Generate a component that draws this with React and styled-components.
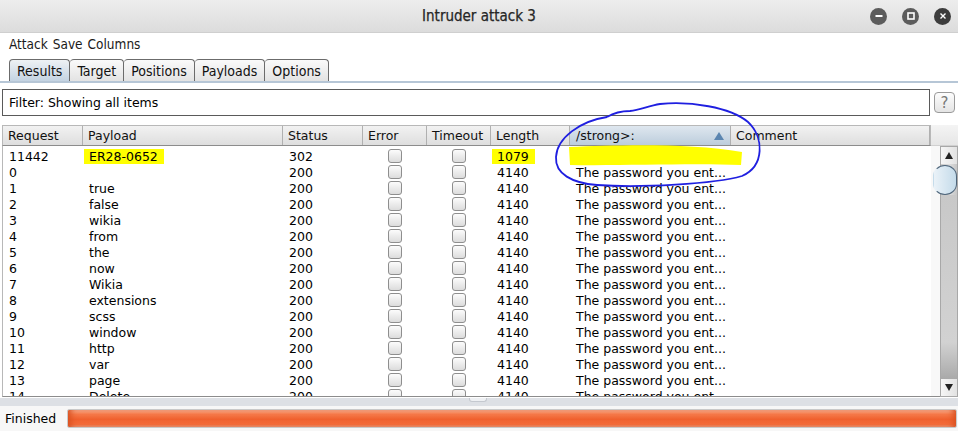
import styled, { createGlobalStyle } from "styled-components";

const GlobalStyle = createGlobalStyle`
  html, body {
    margin: 0;
    padding: 0;
    background: #ffffff;
    overflow: hidden;
  }
  * { box-sizing: border-box; }
`;

const Window = styled.div`
  position: relative;
  width: 958px;
  height: 431px;
  display: flex;
  flex-direction: column;
  font-family: "DejaVu Sans", sans-serif;
  font-size: 12px;
  color: #000;
  background: #fff;
`;

const TitleBar = styled.div`
  height: 33px;
  display: grid;
  grid-template-columns: 1fr auto 1fr;
  align-items: center;
  background: linear-gradient(#ededed, #dcdcdc);
  border-bottom: 1px solid #cfcfcf;
`;

const Title = styled.div`
  grid-column: 2;
  font-family: "DejaVu Sans Condensed", "DejaVu Sans", sans-serif;
  font-stretch: condensed;
  font-size: 15px;
  font-weight: 500;
  color: #262626;
  -webkit-text-stroke: 0.25px #262626;
`;

const WinButtons = styled.div`
  grid-column: 3;
  justify-self: end;
  display: flex;
  gap: 15px;
  padding-right: 7px;
`;

const WinButton = styled.div`
  width: 17px;
  height: 17px;
  border-radius: 50%;
  background: ${(p) => (p.$dark ? "#3c3c3c" : "#5c5c5c")};
  display: flex;
  align-items: center;
  justify-content: center;
`;

const MenuBar = styled.div`
  height: 21px;
  display: flex;
  align-items: center;
  gap: 5px;
  padding-left: 9px;
  font-family: "DejaVu Sans Condensed", "DejaVu Sans", sans-serif;
  font-stretch: condensed;
  font-size: 13.5px;
  color: #1a1a1a;
`;

const TabStrip = styled.div`
  height: 29px;
  display: flex;
  align-items: flex-end;
  padding-left: 9px;
  border-bottom: 2px solid #b6c6d6;
`;

const Tab = styled.div`
  height: 22px;
  padding: 0 7px;
  display: flex;
  align-items: center;
  border: 1px solid #6b6b6b;
  border-bottom: none;
  border-left: ${(p) => (p.$first ? "1px solid #6b6b6b" : "none")};
  border-radius: 4px 4px 0 0;
  font-family: "DejaVu Sans Condensed", "DejaVu Sans", sans-serif;
  font-stretch: condensed;
  font-size: 14px;
  color: #111;
  background: ${(p) =>
    p.$active
      ? "linear-gradient(#eef1f4, #c3d3e2)"
      : "linear-gradient(#fafafa, #e3e3e3)"};
`;

const FilterRow = styled.div`
  display: flex;
  align-items: center;
  gap: 4px;
  padding: 6px 3px 0 2px;
`;

const FilterBox = styled.div`
  width: 928px;
  height: 27px;
  border: 1px solid #5a5a5a;
  display: flex;
  align-items: center;
  padding-left: 6px;
  font-size: 12.5px;
`;

const HelpButton = styled.div`
  width: 21px;
  height: 21px;
  border: 1px solid #9a9a9a;
  border-radius: 4px;
  background: linear-gradient(#fdfdfd, #e4e4e4);
  display: flex;
  align-items: center;
  justify-content: center;
  font-size: 15px;
  color: #777;
`;

const TableFrame = styled.div`
  margin: 9px 0 0 2px;
  display: grid;
  grid-template-columns: 929px 9px 18px;
  grid-template-rows: 21px 251px;
`;

const HeaderRow = styled.div`
  display: flex;
  border: 1px solid #b8b8b8;
  border-bottom: 1px solid #8c8c8c;
  background: linear-gradient(#f2f2f2, #dedede);
`;

const HeaderCell = styled.div`
  width: ${(p) => p.$w}px;
  flex: none;
  display: flex;
  align-items: center;
  justify-content: space-between;
  padding: 0 6px 0 ${(p) => (p.$sorted ? 6 : 5)}px;
  border-right: 1px solid #b0b0b0;
  font-size: 12.5px;
  color: #111;
  background: ${(p) =>
    p.$sorted ? "linear-gradient(#dfe7ef, #bccddc)" : "transparent"};
`;

const SortArrow = styled.span`
  width: 0;
  height: 0;
  border-left: 5px solid transparent;
  border-right: 5px solid transparent;
  border-bottom: 8px solid #5b85b0;
`;

const HeaderCorner = styled.div`
  grid-column: 2 / 4;
  background: linear-gradient(#f4f4f4, #e6e6e6);
  border-bottom: 1px solid #d0d0d0;
`;

const Body = styled.div`
  border-left: 1px solid #b8b8b8;
  border-bottom: 1px solid #8c8c8c;
  overflow: hidden;
  background: #fff;
  padding-top: 2px;
`;

const Gap = styled.div`
  background: #f8f8f8;
  border-bottom: 1px solid #8c8c8c;
`;

const Row = styled.div`
  height: 16px;
  display: flex;
  align-items: center;
`;

const Cell = styled.div`
  width: ${(p) => p.$w}px;
  flex: none;
  padding-left: 6px;
  display: flex;
  align-items: center;
  justify-content: ${(p) => (p.$center ? "center" : "flex-start")};
  font-size: 12.5px;
  white-space: nowrap;
  overflow: hidden;
`;

const Marker = styled.span`
  background: #ffff00;
  margin-left: -5px;
  padding: 0 6px 0 5px;
  line-height: 15px;
`;

const Check = styled.span`
  width: 14px;
  height: 14px;
  margin-right: 6px;
  border: 1px solid #8e8e8e;
  border-radius: 3px;
  background: linear-gradient(#fcfcfc, #dcdcdc);
`;

const ScrollBar = styled.div`
  display: flex;
  flex-direction: column;
  border: 1px solid #a8a8a8;
  background: linear-gradient(90deg, #c9c9c9, #dedede 50%, #c6c6c6);
`;

const ArrowBtn = styled.div`
  height: 17px;
  flex: none;
  background: linear-gradient(90deg, #f6f6f6, #e2e2e2);
  display: flex;
  align-items: center;
  justify-content: center;
`;

const Arrow = styled.span`
  width: 0;
  height: 0;
  border-left: 4px solid transparent;
  border-right: 4px solid transparent;
  ${(p) =>
    p.$down
      ? "border-top: 7px solid #222;"
      : "border-bottom: 7px solid #222;"}
`;

const Thumb = styled.div`
  height: 30px;
  flex: none;
  margin-top: 1px;
  border: 1px solid #4d6479;
  border-radius: 15px / 14px;
  border-left-color: transparent;
  background: linear-gradient(90deg, #eaf2f8, #c4dbea);
  margin-left: -8px;
`;

const Track = styled.div`
  flex: 1;
  background: linear-gradient(#c8c8c8, #d2d2d2 80%, #a9a9a9);
`;

const Splitter = styled.div`
  height: 8px;
  margin-top: 1px;
  background: #dde0e5;
  display: flex;
  justify-content: center;
`;

const Grip = styled.div`
  width: 18px;
  height: 4px;
  margin-left: -2px;
  border: 1px solid #c4c8cf;
  border-top: none;
  border-radius: 0 0 3px 3px;
  background: #eef0f3;
`;

const StatusBar = styled.div`
  flex: 1;
  display: flex;
  align-items: center;
  gap: 11px;
  padding: 0 1px 0 5px;
  background: #f7f7f7;
  font-size: 12.5px;
`;

const Progress = styled.div`
  flex: 1;
  height: 19px;
  border: 1px solid #c9c9c9;
  border-radius: 2px;
  background: linear-gradient(
    #f9b79a 0%,
    #f57a4a 25%,
    #f0602e 55%,
    #f36e3c 85%,
    #e8a084 100%
  );
  box-shadow: inset 6px 0 6px -3px #d85020, inset -6px 0 6px -3px #d85020;
`;

const Annotation = styled.svg`
  position: absolute;
  left: 0;
  top: 0;
  pointer-events: none;
`;

const cols = [
  { key: "req", label: "Request", w: 80 },
  { key: "payload", label: "Payload", w: 200 },
  { key: "status", label: "Status", w: 80 },
  { key: "error", label: "Error", w: 64 },
  { key: "timeout", label: "Timeout", w: 64 },
  { key: "length", label: "Length", w: 79 },
  { key: "strong", label: "/strong>:", w: 161, sorted: true },
  { key: "comment", label: "Comment", w: 199 },
];

const msg = "The password you ent...";
const rows = [
  ["11442", "ER28-0652", "302", "1079", ""],
  ["0", "", "200", "4140", msg],
  ["1", "true", "200", "4140", msg],
  ["2", "false", "200", "4140", msg],
  ["3", "wikia", "200", "4140", msg],
  ["4", "from", "200", "4140", msg],
  ["5", "the", "200", "4140", msg],
  ["6", "now", "200", "4140", msg],
  ["7", "Wikia", "200", "4140", msg],
  ["8", "extensions", "200", "4140", msg],
  ["9", "scss", "200", "4140", msg],
  ["10", "window", "200", "4140", msg],
  ["11", "http", "200", "4140", msg],
  ["12", "var", "200", "4140", msg],
  ["13", "page", "200", "4140", msg],
  ["14", "Delete", "200", "4140", msg],
];

const tabs = ["Results", "Target", "Positions", "Payloads", "Options"];

const App = () => {
  return (
    <Window>
      <GlobalStyle />
      <TitleBar>
        <Title>Intruder attack 3</Title>
        <WinButtons>
          <WinButton>
            <svg width="8" height="8" viewBox="0 0 8 8">
              <rect x="0.5" y="3" width="7" height="2" fill="#fff" />
            </svg>
          </WinButton>
          <WinButton>
            <svg width="8" height="8" viewBox="0 0 8 8">
              <rect x="1" y="1" width="6" height="6" fill="none" stroke="#fff" strokeWidth="1.6" />
            </svg>
          </WinButton>
          <WinButton $dark>
            <svg width="8" height="8" viewBox="0 0 8 8">
              <path d="M1.5 1.5 L6.5 6.5 M6.5 1.5 L1.5 6.5" stroke="#fff" strokeWidth="1.4" />
            </svg>
          </WinButton>
        </WinButtons>
      </TitleBar>

      <MenuBar>
        <span>Attack</span>
        <span>Save</span>
        <span>Columns</span>
      </MenuBar>

      <TabStrip>
        {tabs.map((t, i) => (
          <Tab key={t} $first={i === 0} $active={i === 0}>
            {t}
          </Tab>
        ))}
      </TabStrip>

      <FilterRow>
        <FilterBox>Filter: Showing all items</FilterBox>
        <HelpButton>?</HelpButton>
      </FilterRow>

      <TableFrame>
        <HeaderRow>
          {cols.map((c) => (
            <HeaderCell key={c.key} $w={c.w} $sorted={c.sorted}>
              {c.label}
              {c.sorted && <SortArrow />}
            </HeaderCell>
          ))}
        </HeaderRow>
        <HeaderCorner />
        <Body>
          {rows.map((r, i) => (
            <Row key={r[0]}>
              <Cell $w={80}>{r[0]}</Cell>
              <Cell $w={200}>{i === 0 ? <Marker>{r[1]}</Marker> : r[1]}</Cell>
              <Cell $w={80}>{r[2]}</Cell>
              <Cell $w={64} $center>
                <Check />
              </Cell>
              <Cell $w={64} $center>
                <Check />
              </Cell>
              <Cell $w={79}>{i === 0 ? <Marker>{r[3]}</Marker> : r[3]}</Cell>
              <Cell $w={161}>{r[4]}</Cell>
              <Cell $w={199} />
            </Row>
          ))}
        </Body>
        <Gap />
        <ScrollBar>
          <ArrowBtn>
            <Arrow />
          </ArrowBtn>
          <Thumb />
          <Track />
          <ArrowBtn>
            <Arrow $down />
          </ArrowBtn>
        </ScrollBar>
      </TableFrame>

      <Splitter>
        <Grip />
      </Splitter>

      <StatusBar>
        <span>Finished</span>
        <Progress />
      </StatusBar>

      <Annotation width="958" height="431" viewBox="0 0 958 431">
        <path
          d="M569 147 C 620 145, 690 143, 742 152 L 741 165 C 690 163, 620 166, 570 165 Z"
          fill="#ffff00"
        />
        <path
          d="M607 117 C 580 121, 557 138, 556 157 C 555 174, 572 183, 597 185 C 640 188, 715 184, 742 176 C 765 166, 764 137, 748 122 C 730 107, 690 101, 660 104 C 648 106, 640 110, 630 111 C 620 111, 612 114, 607 117"
          fill="none"
          stroke="#1f1fe0"
          strokeWidth="1.8"
        />
      </Annotation>
    </Window>
  );
};

export default App;
